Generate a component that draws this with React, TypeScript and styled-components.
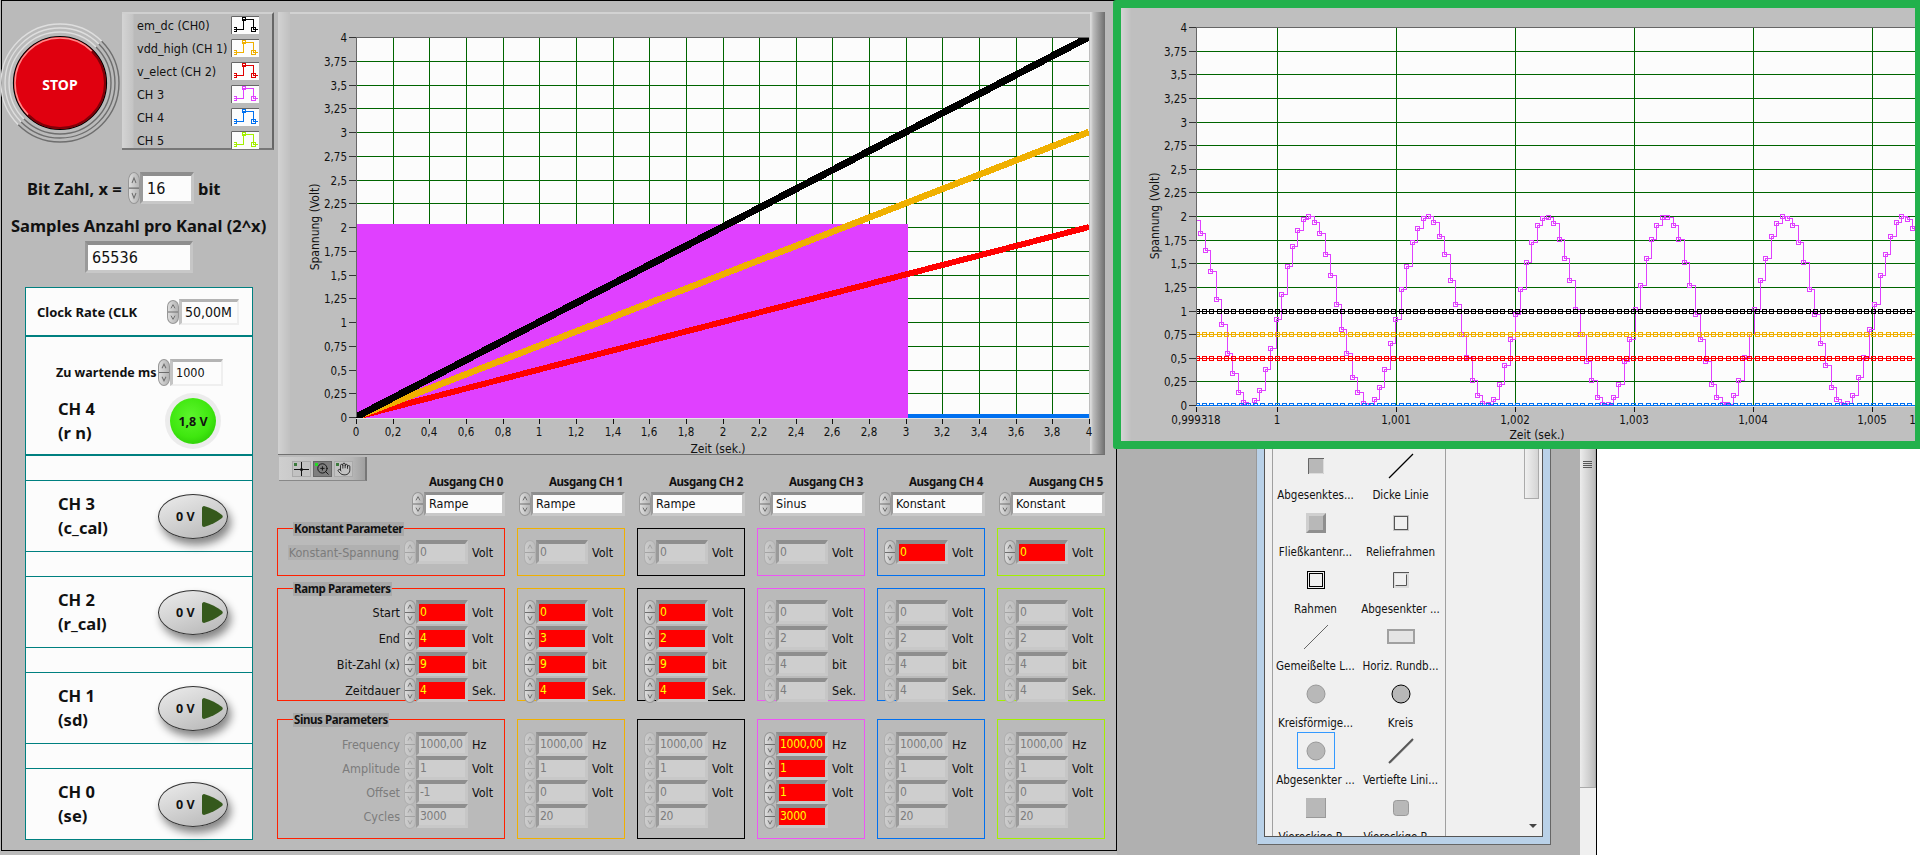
import React from 'react';
import styled, { createGlobalStyle } from 'styled-components';
import { Hand, ZoomIn } from 'lucide-react';

const FONT = '"DejaVu Sans Condensed", "Liberation Sans", sans-serif';
const BOLD_FONT = '"Noto Sans", "Liberation Sans", sans-serif';

const GlobalStyle = createGlobalStyle`
  html, body {
    margin: 0;
    padding: 0;
    background: #bababa;
    font-family: ${FONT};
    font-size: 12.5px;
    color: #111;
  }
`;

/* ---------- data ---------- */

interface IChannel {
  name: string;
  color: string;
  mode: string;
  konstantOn: boolean;
  rampOn: boolean;
  sinusOn: boolean;
  ramp: string[];
  sinus: string[];
}

const channels: IChannel[] = [
  { name: 'Ausgang CH 0', color: '#ff2000', mode: 'Rampe', konstantOn: false, rampOn: true, sinusOn: false, ramp: ['0', '4', '9', '4'], sinus: ['1000,00', '1', '-1', '3000'] },
  { name: 'Ausgang CH 1', color: '#f0b000', mode: 'Rampe', konstantOn: false, rampOn: true, sinusOn: false, ramp: ['0', '3', '9', '4'], sinus: ['1000,00', '1', '0', '20'] },
  { name: 'Ausgang CH 2', color: '#000000', mode: 'Rampe', konstantOn: false, rampOn: true, sinusOn: false, ramp: ['0', '2', '9', '4'], sinus: ['1000,00', '1', '0', '20'] },
  { name: 'Ausgang CH 3', color: '#ee55f5', mode: 'Sinus', konstantOn: false, rampOn: false, sinusOn: true, ramp: ['0', '2', '4', '4'], sinus: ['1000,00', '1', '1', '3000'] },
  { name: 'Ausgang CH 4', color: '#0070f0', mode: 'Konstant', konstantOn: true, rampOn: false, sinusOn: false, ramp: ['0', '2', '4', '4'], sinus: ['1000,00', '1', '0', '20'] },
  { name: 'Ausgang CH 5', color: '#a4f000', mode: 'Konstant', konstantOn: true, rampOn: false, sinusOn: false, ramp: ['0', '2', '4', '4'], sinus: ['1000,00', '1', '0', '20'] },
];

const legendItems = [
  { label: 'em_dc (CH0)', color: '#000000' },
  { label: 'vdd_high (CH 1)', color: '#f0b000' },
  { label: 'v_elect (CH 2)', color: '#e00000' },
  { label: 'CH 3', color: '#e040ff' },
  { label: 'CH 4', color: '#0070f0' },
  { label: 'CH 5', color: '#a4f000' },
];

const rampRows = [
  { label: 'Start', unit: 'Volt' },
  { label: 'End', unit: 'Volt' },
  { label: 'Bit-Zahl (x)', unit: 'bit' },
  { label: 'Zeitdauer', unit: 'Sek.' },
];

const sinusRows = [
  { label: 'Frequency', unit: 'Hz' },
  { label: 'Amplitude', unit: 'Volt' },
  { label: 'Offset', unit: 'Volt' },
  { label: 'Cycles', unit: '' },
];

const paletteItems = [
  { kind: 'sunkBox', label: 'Abgesenktes...' },
  { kind: 'thickLine', label: 'Dicke Linie' },
  { kind: 'flowBox', label: 'Fließkantenr...' },
  { kind: 'reliefFrame', label: 'Reliefrahmen' },
  { kind: 'doubleFrame', label: 'Rahmen' },
  { kind: 'sunkFrame', label: 'Abgesenkter ...' },
  { kind: 'thinLine', label: 'Gemeißelte L...' },
  { kind: 'roundBar', label: 'Horiz. Rundb...' },
  { kind: 'softCircle', label: 'Kreisförmige...' },
  { kind: 'circle', label: 'Kreis' },
  { kind: 'softCircle', label: 'Abgesenkter ...', selected: true },
  { kind: 'grooveLine', label: 'Vertiefte Lini...' },
  { kind: 'flatBox', label: 'Viereckige R...' },
  { kind: 'roundBox', label: 'Viereckige B...' },
];

const comma = (n: number) => String(n).replace('.', ',');
const yLabels = Array.from({ length: 17 }, (_, i) => comma(i * 0.25));

/* ---------- small controls ---------- */

const SpinnerBody = styled.div<{ $h: number; $off?: boolean }>`
  flex: none;
  position: relative;
  width: 12px;
  height: ${p => p.$h}px;
  box-sizing: border-box;
  border: 1px solid ${p => (p.$off ? '#b0b0b0' : '#979797')};
  border-radius: 50% / 28%;
  background: ${p =>
    p.$off
      ? 'linear-gradient(90deg, #cdcdcd, #bdbdbd)'
      : 'linear-gradient(90deg, #dddddd, #b4b4b4)'};
  svg {
    display: block;
    width: 10px;
    height: 100%;
  }
`;

const Spinner: React.FC<{ h?: number; off?: boolean }> = ({ h = 24, off }) => (
  <SpinnerBody $h={h} $off={off}>
    <svg viewBox="0 0 10 24" preserveAspectRatio="none">
      <path
        d="M0 12h10M3 8l2-4 2 4M3 16l2 4 2-4"
        fill="none"
        stroke={off ? '#a2a2a2' : '#6c6c6c'}
        strokeWidth="1"
      />
    </svg>
  </SpinnerBody>
);

const NumberBox = styled.div<{ $w: number; $h?: number; $big?: boolean; $tone?: 'red' | 'off' }>`
  flex: none;
  width: ${p => p.$w}px;
  height: ${p => p.$h ?? 24}px;
  box-sizing: border-box;
  border-style: solid;
  border-width: 4px 3px 3px 3px;
  border-color: #8e8e8e #c6c6c6 #c8c8c8 #9a9a9a;
  padding-left: ${p => (p.$big ? 4 : 1)}px;
  font-size: ${p => (p.$big ? 16 : 12)}px;
  letter-spacing: ${p => (p.$big ? 0 : -0.3)}px;
  line-height: ${p => (p.$h ?? 24) - 7}px;
  white-space: nowrap;
  overflow: hidden;
  background: ${p => (p.$tone === 'red' ? '#ff0000' : p.$tone === 'off' ? '#cecece' : '#fcfcfc')};
  color: ${p => (p.$tone === 'red' ? '#ffff00' : p.$tone === 'off' ? '#7c7c7c' : '#111')};
`;

const WhiteBox = styled.div<{ $w: number; $h: number; $big?: boolean }>`
  flex: none;
  width: ${p => p.$w}px;
  height: ${p => p.$h}px;
  box-sizing: border-box;
  border-style: solid;
  border-width: 3px 2px 2px 3px;
  border-color: #b4b4b4 #efefef #efefef #c4c4c4;
  padding-left: 3px;
  background: #fcfcfc;
  font-size: ${p => (p.$big ? 14 : 12.5)}px;
  line-height: ${p => p.$h - 5}px;
  color: #111;
`;

/* ---------- page ---------- */

const Page = styled.div`
  position: relative;
  display: flex;
  width: 1920px;
  height: 855px;
  overflow: hidden;
`;

const FrontPanel = styled.main`
  flex: none;
  display: flex;
  width: 1116px;
  height: 851px;
  margin-left: 1px;
  box-sizing: border-box;
  border: 1px solid #000;
  background: #bababa;
`;

const LeftColumn = styled.div`
  flex: none;
  width: 275px;
`;

const TopRow = styled.div`
  display: flex;
  margin-top: 11px;
`;

const StopSvg = styled.svg`
  flex: none;
  display: block;
  font-family: ${BOLD_FONT};
  overflow: visible;
`;

const Legend = styled.div`
  flex: none;
  display: flex;
  flex-direction: column;
  gap: 5px;
  width: 152px;
  height: 138px;
  box-sizing: border-box;
  padding: 2px 15px 0 15px;
  border-top: 2px solid #d0d0d0;
  border-right: 2px solid #666;
  border-bottom: 2px solid #777;
  background: linear-gradient(90deg, #d4d4d4, #c4c4c4 11px, #bababa 12px);
`;

const LegendRow = styled.div`
  display: flex;
  justify-content: space-between;
  align-items: center;
  height: 18px;
  white-space: nowrap;
`;

const LegendSwatch = styled.svg`
  flex: none;
  display: block;
  margin-right: -2px;
`;

const BitRow = styled.div`
  display: flex;
  align-items: center;
  height: 32px;
  margin: 22px 0 0 25px;
`;

const BoldLabel = styled.span`
  font-family: ${BOLD_FONT};
  font-weight: 700;
  font-size: 16.5px;
  white-space: nowrap;
`;

const BitText = styled(BoldLabel)`
  width: 101px;
`;

const BitUnit = styled(BoldLabel)`
  margin-left: 4px;
`;

const SamplesLabel = styled(BoldLabel)`
  display: block;
  margin: 12px 0 0 9px;
  line-height: 20px;
`;

const SamplesBox = styled(NumberBox)`
  margin: 5px 0 0 83px;
`;

const ChannelStack = styled.div`
  width: 228px;
  height: 553px;
  margin: 14px 0 0 23px;
  box-sizing: border-box;
  border: 1px solid #008080;
  background: #fcfcfc;
`;

const StackSection = styled.div<{ $h: number; $line?: number; $pad?: number }>`
  height: ${p => p.$h}px;
  box-sizing: border-box;
  padding-top: ${p => p.$pad ?? 0}px;
  border-bottom: ${p => p.$line ?? 1}px solid #008080;
`;

const ClockSection = styled(StackSection)`
  display: flex;
  align-items: center;
  padding-left: 11px;
`;

const ClockLabel = styled.span`
  width: 130px;
  font-family: ${BOLD_FONT};
  font-size: 13px;
  font-weight: 700;
  white-space: nowrap;
  overflow: hidden;
`;

const WaitRow = styled.div`
  display: flex;
  align-items: center;
  height: 28px;
  padding-left: 30px;
`;

const WaitLabel = styled.span`
  width: 102px;
  font-family: ${BOLD_FONT};
  font-size: 12.5px;
  font-weight: 700;
  white-space: nowrap;
`;

const ChannelRow = styled.div`
  display: grid;
  grid-template-columns: 1fr 76px;
  align-items: center;
  height: 70px;
  padding: 0 21px 0 32px;
`;

const ChannelName = styled.div`
  font-family: ${BOLD_FONT};
  font-size: 16.5px;
  font-weight: 700;
  line-height: 24px;
  white-space: nowrap;
`;

const Led = styled.div`
  justify-self: center;
  width: 46px;
  height: 46px;
  border-radius: 50%;
  display: flex;
  align-items: center;
  justify-content: center;
  font-family: ${BOLD_FONT};
  font-size: 12.5px;
  font-weight: 700;
  box-shadow: 0 0 0 5px #ececec;
  background: radial-gradient(circle at 45% 40%, #5cf52c 0%, #3fe70f 55%, #20b800 100%);
`;

const Toggle = styled.div`
  justify-self: center;
  display: flex;
  align-items: center;
  gap: 7px;
  width: 70px;
  height: 45px;
  box-sizing: border-box;
  padding-left: 17px;
  border: 1px solid #333;
  border-radius: 50%;
  font-family: ${BOLD_FONT};
  font-size: 12.5px;
  font-weight: 700;
  background: linear-gradient(160deg, #ececec, #cfcfcf 55%, #b5b5b5);
  box-shadow: 3px 6px 8px #858585;
  svg {
    flex: none;
    display: block;
  }
`;

const ToggleButton = () => (
  <Toggle>
    <span>0 V</span>
    <svg width="21" height="23" viewBox="0 0 21 23">
      <path d="M2 1c7 2 13 5 18 9 1 1 1 2 0 3-5 4-11 7-18 9-1 0-2-1-2-2V3c0-1 1-2 2-2z" fill="#35591c" />
    </svg>
  </Toggle>
);

const RightColumn = styled.div`
  flex: none;
  width: 839px;
`;

/* ---------- charts ---------- */

const ChartPanel = styled.section`
  width: 827px;
  height: 443px;
  margin: 11px 0 0 1px;
  box-sizing: border-box;
  border-bottom: 1px solid #707070;
  background:
    linear-gradient(90deg, #d2d2d2, #c0c0c0) left top / 12px 100% no-repeat,
    linear-gradient(90deg, #dadada 1px, #bdbdbd 3px, #6e6e6e) right top / 15px 100% no-repeat,
    linear-gradient(#d2d2d2, #d2d2d2) left top / 100% 2px no-repeat,
    #bebebe;
`;

const ChartSvg = styled.svg`
  display: block;
  font-family: ${FONT};
  font-size: 11.5px;
  fill: #111;
`;

interface IChartProps {
  width: number;
  height: number;
  px: number;
  py: number;
  pw: number;
  ph: number;
  grid: number[];
  xTicks: { x: number; label: string }[];
  titleX: number;
  titleY: number;
  sideX: number;
  children: React.ReactNode;
}

const Chart: React.FC<IChartProps> = ({ width, height, px, py, pw, ph, grid, xTicks, titleX, titleY, sideX, children }) => {
  const yAt = (i: number) => Math.round(ph - (i * ph) / 16) + 0.5;
  return (
    <ChartSvg width={width} height={height} viewBox={`0 0 ${width} ${height}`}>
      <text
        x={sideX}
        y={py + ph / 2}
        textAnchor="middle"
        dominantBaseline="central"
        fontSize="12"
        transform={`rotate(-90 ${sideX} ${py + ph / 2})`}
      >
        Spannung (Volt)
      </text>
      {yLabels.map((label, i) => (
        <g key={label}>
          <text x={px - 9} y={py + yAt(i)} textAnchor="end" dominantBaseline="central">
            {label}
          </text>
          <path d={`M${px - 7} ${py + yAt(i)}H${px}`} stroke="#333" shapeRendering="crispEdges" />
        </g>
      ))}
      {xTicks.map(t => (
        <g key={t.label}>
          <text x={px + t.x} y={py + ph + 15} textAnchor="middle" dominantBaseline="central">
            {t.label}
          </text>
          <path d={`M${px + t.x + 0.5} ${py + ph + 2}v5`} stroke="#111" shapeRendering="crispEdges" />
        </g>
      ))}
      <text x={titleX} y={titleY} textAnchor="middle" dominantBaseline="central" fontSize="12">
        Zeit (sek.)
      </text>
      <path d={`M${px} ${py + ph + 1}H${px + pw}`} stroke="#e4e4e4" strokeWidth="2" shapeRendering="crispEdges" />
      <svg x={px} y={py} width={pw} height={ph + 1} viewBox={`0 0 ${pw} ${ph + 1}`}>
        <rect width={pw} height={ph + 1} fill="#fcfcfc" />
        <g stroke="#006400" strokeWidth="1" shapeRendering="crispEdges" fill="none">
          {yLabels.map((label, i) => (
            <path key={label} d={`M0 ${yAt(i)}H${pw}`} />
          ))}
          {grid.map(x => (
            <path key={x} d={`M${x + 0.5} 0V${ph}`} />
          ))}
        </g>
        {children}
        <path d={`M0.5 0V${ph}M0 0.5H${pw}`} stroke="#666" fill="none" shapeRendering="crispEdges" />
      </svg>
    </ChartSvg>
  );
};

const rampGrid = Array.from({ length: 20 }, (_, i) => Math.round(((i + 1) * 733) / 20));
const rampTicks = Array.from({ length: 21 }, (_, i) => ({
  x: Math.round((i * 733) / 20),
  label: comma(Math.round(i * 20) / 100),
}));

const RampPlot = () => (
  <>
    <rect x="0" y="187" width="552" height="194" fill="#e040ff" />
    <rect x="552" y="377" width="181" height="4" fill="#0070f0" />
    <path d="M0 380L733 190" stroke="#ff0000" strokeWidth="6" shapeRendering="crispEdges" />
    <path d="M0 380L733 95" stroke="#f0b000" strokeWidth="6.5" shapeRendering="crispEdges" />
    <path d="M0 380L733 0" stroke="#000000" strokeWidth="7" shapeRendering="crispEdges" />
  </>
);

/* plot origin of the zoomed chart, in page pixels */
const Z_LEFT = 1196;
const Z_TOP = 27;
const zY = (v: number) => Math.round(378 - v * 94.5);

const zoomXs = (start: number, step: number) => {
  const out: number[] = [];
  for (let x = start; x < 1920; x += step) out.push(Math.round(x - Z_LEFT));
  return out;
};

const squares = (pts: [number, number][]) =>
  pts.map(([x, y]) => `M${x - 1.5} ${y - 1.5}h4v4h-4z`).join('');

const sinePts: [number, number][] = zoomXs(1308.3 - 21 * 5.44, 5.44).map(x => [
  x,
  zY(1 + Math.cos((2 * Math.PI * (x + Z_LEFT - 1307.5)) / 119)),
]);

const sineLine = sinePts
  .map(([x, y], i) => (i === 0 ? `M${x + 0.5} ${y + 0.5}` : `H${x + 0.5}V${y + 0.5}`))
  .join('');

const flatSeries = [
  { v: 0, color: '#0070f0' },
  { v: 0.5, color: '#ff0000' },
  { v: 0.75, color: '#f0b000' },
  { v: 1, color: '#000000' },
];

const flatXs = zoomXs(1306 - 15 * 7.27, 7.27);

const SinePlot = () => (
  <g fill="none" shapeRendering="crispEdges" strokeWidth="1">
    <path d={sineLine} stroke="#e040ff" />
    <path d={squares(sinePts)} stroke="#e040ff" />
    {flatSeries.map(s => {
      const y = zY(s.v);
      return (
        <g key={s.color} stroke={s.color}>
          <path d={`M0 ${y + 0.5}H719`} />
          <path d={squares(flatXs.map(x => [x, y] as [number, number]))} />
        </g>
      );
    })}
  </g>
);

const zoomGrid = [81, 200, 319, 438, 557, 676];
const zoomTicks = [
  { x: 0, label: '0,999318' },
  ...zoomGrid.map((x, i) => ({ x, label: i === 0 ? '1' : `1,00${i}` })),
  { x: 728, label: '1,006' },
];

const ZoomOverlay = styled.section`
  position: absolute;
  top: 0;
  left: 1113px;
  z-index: 10;
  width: 807px;
  height: 449px;
  box-sizing: border-box;
  border-style: solid;
  border-color: #22b14c;
  border-width: 8px 5px 8px 8px;
  border-radius: 3px 0 0 3px;
  overflow: hidden;
  background:
    linear-gradient(90deg, #d4d4d4, #c0c0c0) left top / 10px 100% no-repeat,
    #bfbfbf;
`;

/* ---------- graph toolbar ---------- */

const Toolbar = styled.div`
  flex: none;
  align-self: flex-start;
  display: flex;
  gap: 2px;
  width: 88px;
  height: 24px;
  margin-left: 2px;
  box-sizing: border-box;
  padding: 4px 0 0 13px;
  border-right: 2px solid #777;
  border-bottom: 1px solid #888;
  background: linear-gradient(90deg, #cfcfcf, #b6b6b6 85%, #a0a0a0);
`;

const ToolButton = styled.div<{ $pressed?: boolean }>`
  position: relative;
  display: flex;
  align-items: center;
  justify-content: center;
  width: 19px;
  height: 16px;
  box-sizing: border-box;
  border: 1px solid ${p => (p.$pressed ? '#666' : '#aaa')};
  color: #111;
  background: ${p => (p.$pressed ? '#7e7e7e' : '#c2c2c2')};
  &::before {
    content: '';
    position: absolute;
    left: 1px;
    top: 1px;
    width: 3px;
    height: 3px;
    background: ${p => (p.$pressed ? '#22dd22' : '#3c7a3c')};
  }
`;

/* ---------- output columns ---------- */

const OutputGrid = styled.div<{ $top: number; $h: number }>`
  display: grid;
  grid-template-columns: 228px repeat(5, 108px);
  column-gap: 12px;
  grid-auto-rows: ${p => p.$h}px;
  margin-top: ${p => p.$top}px;
`;

const OutputCell = styled.div`
  display: flex;
  flex-direction: column;
  justify-content: flex-end;
  align-items: flex-end;
`;

const FirstCell = styled.div`
  display: flex;
  justify-content: space-between;
`;

const OutputTitle = styled.div`
  font-family: ${BOLD_FONT};
  font-size: 11.5px;
  letter-spacing: -0.4px;
  font-weight: 700;
  line-height: 17px;
  margin-bottom: 2px;
  padding-right: 2px;
  white-space: nowrap;
`;

const ModeSelect = styled.div`
  display: flex;
`;

const ModeBox = styled.div<{ $w: number }>`
  width: ${p => p.$w}px;
  height: 24px;
  box-sizing: border-box;
  border-style: solid;
  border-width: 3px 3px 3px 2px;
  border-color: #8e8e8e #c6c6c6 #c8c8c8 #9a9a9a;
  padding-left: 3px;
  background: #fcfcfc;
  line-height: 18px;
`;

const Group = styled.div<{ $color: string; $pad: number }>`
  position: relative;
  box-sizing: border-box;
  border: 1px solid ${p => p.$color};
  padding-top: ${p => p.$pad}px;
`;

const GroupTitle = styled.span`
  position: absolute;
  top: -7px;
  left: 15px;
  padding: 0 1px;
  font-family: ${BOLD_FONT};
  font-size: 11.5px;
  letter-spacing: -0.4px;
  font-weight: 700;
  line-height: 14px;
  background: #a9a9a9;
  white-space: nowrap;
`;

const ParamRow = styled.div<{ $h: number; $first: boolean }>`
  display: flex;
  align-items: center;
  height: ${p => p.$h}px;
  padding-left: ${p => (p.$first ? 0 : 6)}px;
`;

const ParamLabel = styled.span<{ $off?: boolean }>`
  flex: none;
  width: 122px;
  margin-right: 4px;
  text-align: right;
  white-space: nowrap;
  color: ${p => (p.$off ? '#7c7c7c' : '#111')};
`;

const KonstantLabel = styled.span`
  padding: 0 1px;
  background: #b0b0b0;
`;

const Unit = styled.span`
  margin-left: 4px;
  white-space: nowrap;
`;

interface IParamProps {
  label?: React.ReactNode;
  labelOff?: boolean;
  value: string;
  on: boolean;
  unit: string;
  h: number;
  first: boolean;
}

const Param: React.FC<IParamProps> = ({ label, labelOff, value, on, unit, h, first }) => (
  <ParamRow $h={h} $first={first}>
    {first && <ParamLabel $off={labelOff}>{label}</ParamLabel>}
    <Spinner off={!on} h={25} />
    <NumberBox $w={52} $tone={on ? 'red' : 'off'}>
      {value}
    </NumberBox>
    {unit && <Unit>{unit}</Unit>}
  </ParamRow>
);

/* ---------- palette window ---------- */

const Desktop = styled.div`
  flex: none;
  display: flex;
  align-items: flex-end;
  width: 463px;
  height: 855px;
  box-sizing: border-box;
  padding: 0 30px 11px 140px;
  background: #b0b0b0;
`;

const PaletteWindow = styled.aside`
  display: flex;
  width: 293px;
  height: 404px;
  box-sizing: border-box;
  border: 7px solid #b9d1e8;
  border-top: none;
  box-shadow: 1px 1px 0 #666, -1px 0 0 #999;
`;

const PaletteInner = styled.div`
  flex: 1;
  display: flex;
  height: 100%;
  box-sizing: border-box;
  border: 1px solid #555;
  border-top: none;
  background: #f0f0f0;
  padding-left: 7px;
  overflow: hidden;
`;

const PaletteList = styled.div`
  flex: none;
  display: grid;
  grid-template-columns: 85px 85px;
  grid-auto-rows: 57px;
  align-content: start;
  width: 174px;
  box-sizing: border-box;
  padding-top: 7px;
  border-left: 1px solid #a0a0a0;
  border-right: 1px solid #a0a0a0;
`;

const PaletteItem = styled.div`
  display: flex;
  flex-direction: column;
  align-items: center;
`;

const PaletteIconCell = styled.div<{ $selected?: boolean }>`
  flex: none;
  display: flex;
  align-items: center;
  justify-content: center;
  width: 38px;
  height: 37px;
  box-sizing: border-box;
  border: 1px solid ${p => (p.$selected ? '#3399ff' : 'transparent')};
`;

const PaletteLabel = styled.span`
  flex: none;
  font-size: 11.5px;
  line-height: 23px;
  white-space: nowrap;
`;

const PaletteGap = styled.div`
  flex: 1;
`;

const PaletteScroll = styled.div`
  flex: none;
  position: relative;
  width: 19px;
  background: #f0f0f0;
`;

const PaletteThumb = styled.div`
  width: 15px;
  height: 59px;
  margin-left: 1px;
  box-sizing: border-box;
  border: 1px solid #aaa;
  border-top: none;
  background: linear-gradient(90deg, #f0f0f0, #d4d4d4);
`;

const PaletteArrow = styled.div`
  position: absolute;
  left: 6px;
  bottom: 8px;
  border-style: solid;
  border-width: 4px 4px 0 4px;
  border-color: #444 transparent transparent transparent;
`;

const PaletteIcon: React.FC<{ kind: string }> = ({ kind }) => {
  switch (kind) {
    case 'sunkBox':
      return (
        <svg width="18" height="18">
          <rect x="1" y="1" width="16" height="16" fill="#b8b8b8" />
          <path d="M1.5 17V1.5H17" stroke="#666" fill="none" />
          <path d="M2 16.5H16.5V2" stroke="#dcdcdc" fill="none" />
        </svg>
      );
    case 'thickLine':
      return (
        <svg width="26" height="26">
          <path d="M1 25L25 1" stroke="#000" strokeWidth="1.2" />
        </svg>
      );
    case 'flowBox':
      return (
        <svg width="20" height="20">
          <rect width="20" height="20" fill="#8f8f8f" />
          <path d="M0 0H20L17 3H3V17L0 20z" fill="#cfcfcf" />
          <rect x="3" y="3" width="14" height="14" fill="#b8b8b8" />
        </svg>
      );
    case 'reliefFrame':
      return (
        <svg width="16" height="16">
          <rect width="16" height="16" fill="#c8c8c8" />
          <rect x="1.5" y="1.5" width="13" height="13" fill="#f0f0f0" stroke="#555" />
        </svg>
      );
    case 'doubleFrame':
      return (
        <svg width="18" height="18">
          <rect x="0.5" y="0.5" width="17" height="17" fill="none" stroke="#000" />
          <rect x="2.5" y="2.5" width="13" height="13" fill="#f0f0f0" stroke="#000" />
        </svg>
      );
    case 'sunkFrame':
      return (
        <svg width="16" height="16">
          <rect width="16" height="16" fill="#dcdcdc" />
          <rect x="2" y="2" width="12" height="12" fill="#f0f0f0" />
          <path d="M0.5 16V0.5H16M2.5 13.5H13.5V2.5" stroke="#555" fill="none" />
        </svg>
      );
    case 'thinLine':
      return (
        <svg width="26" height="26">
          <path d="M1 25L25 1" stroke="#666" strokeWidth="1" />
        </svg>
      );
    case 'roundBar':
      return (
        <svg width="28" height="15">
          <rect width="28" height="15" fill="#a0a0a0" />
          <rect x="2" y="2" width="24" height="11" fill="#e4e4e4" />
        </svg>
      );
    case 'softCircle':
      return (
        <svg width="20" height="20">
          <circle cx="10" cy="10" r="9" fill="#b8b8b8" stroke="#999" />
        </svg>
      );
    case 'circle':
      return (
        <svg width="20" height="20">
          <circle cx="10" cy="10" r="9" fill="#b8b8b8" stroke="#000" />
        </svg>
      );
    case 'grooveLine':
      return (
        <svg width="26" height="26">
          <path d="M1 25L25 1" stroke="#555" strokeWidth="2" />
          <path d="M3 25L25 3" stroke="#c8c8c8" strokeWidth="1" />
        </svg>
      );
    case 'flatBox':
      return (
        <svg width="20" height="20">
          <rect width="20" height="20" fill="#b8b8b8" />
          <path d="M0 19.5H20M19.5 0V20" stroke="#999" />
        </svg>
      );
    default:
      return (
        <svg width="16" height="16">
          <rect x="0.5" y="0.5" width="15" height="15" rx="3" fill="#b8b8b8" stroke="#999" />
        </svg>
      );
  }
};

const PageScroll = styled.div`
  flex: none;
  display: flex;
  flex-direction: column;
  width: 17px;
  height: 855px;
  box-sizing: border-box;
  border-right: 1px solid #000;
  background: #f0f0f0;
`;

const PageThumb = styled.div`
  height: 788px;
  box-sizing: border-box;
  padding: 461px 3px 0;
  border-right: 1px solid #aaa;
  border-bottom: 1px solid #aaa;
  background: linear-gradient(90deg, #ececec, #d0d0d0 60%, #bcbcbc);
`;

const Gripper = styled.div`
  height: 7px;
  background: repeating-linear-gradient(#555 0 1px, transparent 1px 2px);
`;

const WhiteArea = styled.div`
  flex: 1;
  background: #ffffff;
`;

/* ---------- stop button ---------- */

const ringArc = (r: number, from: number, to: number) => {
  const a = (from * Math.PI) / 180;
  const b = (to * Math.PI) / 180;
  return `M${58 + r * Math.cos(a)} ${71 + r * Math.sin(a)}A${r} ${r} 0 0 1 ${58 + r * Math.cos(b)} ${71 + r * Math.sin(b)}`;
};

const StopButton = () => (
  <StopSvg width="120" height="138" viewBox="0 0 120 138">
    {[59, 55, 51].map(r => (
      <g key={r} fill="none" strokeWidth="1.4">
        <path d={ringArc(r, 135, 315)} stroke="#dedede" />
        <path d={ringArc(r, -45, 135)} stroke="#6e6e6e" />
      </g>
    ))}
    <circle cx="58" cy="71" r="46.5" fill="#e0000f" stroke="#000" strokeWidth="1.2" />
    <path d={ringArc(45, 135, 315)} stroke="#ff8a8a" strokeWidth="1.5" fill="none" />
    <path d={ringArc(45, -45, 135)} stroke="#800008" strokeWidth="2" fill="none" />
    <text x="58" y="72" textAnchor="middle" dominantBaseline="central" fill="#fff" fontSize="14" fontWeight="700">
      STOP
    </text>
  </StopSvg>
);

const LegendIcon: React.FC<{ color: string }> = ({ color }) => (
  <LegendSwatch width="28" height="18" viewBox="0 0 28 18">
    <rect width="28" height="18" fill="#fcfcfc" />
    <path d="M0.5 18V0.5H28" stroke="#666" fill="none" />
    <g stroke={color} fill="none" shapeRendering="crispEdges">
      <path d="M3 13.5H12.5V3.5H22.5V13.5H27" />
      <path d="M2.5 11.5H5.5V15.5H2.5M11.5 1.5H14.5V4.5H11.5z" />
      <path d="M20.5 11.5H24.5V15.5H20.5z" />
    </g>
  </LegendSwatch>
);

const CrossIcon = () => (
  <svg width="15" height="14" viewBox="0 0 15 14">
    <path d="M7.5 0V14M0 7.5H15" stroke="#111" fill="none" />
    <circle cx="7.5" cy="7.5" r="1.5" fill="#111" />
  </svg>
);

const App: React.FC = () => (
  <Page>
    <GlobalStyle />
    <FrontPanel>
      <LeftColumn>
        <TopRow>
          <StopButton />
          <Legend>
            {legendItems.map(item => (
              <LegendRow key={item.label}>
                {item.label}
                <LegendIcon color={item.color} />
              </LegendRow>
            ))}
          </Legend>
        </TopRow>
        <BitRow>
          <BitText>Bit Zahl, x =</BitText>
          <Spinner h={32} />
          <NumberBox $w={54} $h={32} $big>
            16
          </NumberBox>
          <BitUnit>bit</BitUnit>
        </BitRow>
        <SamplesLabel>Samples Anzahl pro Kanal (2^x)</SamplesLabel>
        <SamplesBox $w={108} $h={32} $big>
          65536
        </SamplesBox>
        <ChannelStack>
          <ClockSection $h={49} $line={2}>
            <ClockLabel>Clock Rate (CLK</ClockLabel>
            <Spinner h={24} />
            <WhiteBox $w={60} $h={26} $big>
              50,00M
            </WhiteBox>
          </ClockSection>
          <StackSection $h={119} $line={2} $pad={21}>
            <WaitRow>
              <WaitLabel>Zu wartende ms</WaitLabel>
              <Spinner h={27} />
              <WhiteBox $w={53} $h={27}>
                1000
              </WhiteBox>
            </WaitRow>
            <ChannelRow>
              <div>
                <ChannelName>CH 4</ChannelName>
                <ChannelName>(r n)</ChannelName>
              </div>
              <Led>1,8 V</Led>
            </ChannelRow>
          </StackSection>
          {[
            ['CH 3', '(c_cal)'],
            ['CH 2', '(r_cal)'],
            ['CH 1', '(sd)'],
            ['CH 0', '(se)'],
          ].map(([name, pin], i) => (
            <React.Fragment key={name}>
              <StackSection $h={25} />
              <StackSection $h={i === 3 ? 70 : 71} $line={i === 3 ? 0 : 1}>
                <ChannelRow>
                  <div>
                    <ChannelName>{name}</ChannelName>
                    <ChannelName>{pin}</ChannelName>
                  </div>
                  <ToggleButton />
                </ChannelRow>
              </StackSection>
            </React.Fragment>
          ))}
        </ChannelStack>
      </LeftColumn>

      <RightColumn>
        <ChartPanel>
          <Chart
            width={827}
            height={442}
            px={78}
            py={25}
            pw={733}
            ph={380}
            grid={rampGrid}
            xTicks={rampTicks}
            titleX={440}
            titleY={437}
            sideX={37}
          >
            <RampPlot />
          </Chart>
        </ChartPanel>

        <OutputGrid $top={2} $h={59}>
          {channels.map((ch, i) => {
            const head = (
              <OutputCell key={ch.name}>
                <OutputTitle>{ch.name}</OutputTitle>
                <ModeSelect>
                  <Spinner h={24} />
                  <ModeBox $w={i === 0 ? 81 : 94}>{ch.mode}</ModeBox>
                </ModeSelect>
              </OutputCell>
            );
            return i === 0 ? (
              <FirstCell key={ch.name}>
                <Toolbar>
                  <ToolButton>
                    <CrossIcon />
                  </ToolButton>
                  <ToolButton $pressed>
                    <ZoomIn size={14} strokeWidth={1.6} />
                  </ToolButton>
                  <ToolButton>
                    <Hand size={14} strokeWidth={1.4} />
                  </ToolButton>
                </Toolbar>
                {head}
              </FirstCell>
            ) : (
              head
            );
          })}
        </OutputGrid>

        <OutputGrid $top={12} $h={48}>
          {channels.map((ch, i) => (
            <Group key={ch.name} $color={ch.color} $pad={11}>
              {i === 0 && <GroupTitle>Konstant Parameter</GroupTitle>}
              <Param
                label={<KonstantLabel>Konstant-Spannung</KonstantLabel>}
                labelOff
                value="0"
                on={ch.konstantOn}
                unit="Volt"
                h={24}
                first={i === 0}
              />
            </Group>
          ))}
        </OutputGrid>

        <OutputGrid $top={12} $h={113}>
          {channels.map((ch, i) => (
            <Group key={ch.name} $color={ch.color} $pad={10}>
              {i === 0 && <GroupTitle>Ramp Parameters</GroupTitle>}
              {rampRows.map((row, r) => (
                <Param
                  key={row.label}
                  label={row.label}
                  value={ch.ramp[r]}
                  on={ch.rampOn}
                  unit={row.unit}
                  h={26}
                  first={i === 0}
                />
              ))}
            </Group>
          ))}
        </OutputGrid>

        <OutputGrid $top={18} $h={120}>
          {channels.map((ch, i) => (
            <Group key={ch.name} $color={ch.color} $pad={12}>
              {i === 0 && <GroupTitle>Sinus Parameters</GroupTitle>}
              {sinusRows.map((row, r) => (
                <Param
                  key={row.label}
                  label={row.label}
                  labelOff
                  value={ch.sinus[r]}
                  on={ch.sinusOn}
                  unit={row.unit}
                  h={24}
                  first={i === 0}
                />
              ))}
            </Group>
          ))}
        </OutputGrid>
      </RightColumn>
    </FrontPanel>

    <Desktop>
      <PaletteWindow>
        <PaletteInner>
          <PaletteList>
            {paletteItems.map((item, i) => (
              <PaletteItem key={i}>
                <PaletteIconCell $selected={item.selected}>
                  <PaletteIcon kind={item.kind} />
                </PaletteIconCell>
                <PaletteLabel>{item.label}</PaletteLabel>
              </PaletteItem>
            ))}
          </PaletteList>
          <PaletteGap />
          <PaletteScroll>
            <PaletteThumb />
            <PaletteArrow />
          </PaletteScroll>
        </PaletteInner>
      </PaletteWindow>
    </Desktop>
    <PageScroll>
      <PageThumb>
        <Gripper />
      </PageThumb>
    </PageScroll>
    <WhiteArea />

    <ZoomOverlay>
      <Chart
        width={794}
        height={433}
        px={Z_LEFT - 1121}
        py={Z_TOP - 8}
        pw={719}
        ph={378}
        grid={zoomGrid}
        xTicks={zoomTicks}
        titleX={416}
        titleY={427}
        sideX={34}
      >
        <SinePlot />
      </Chart>
    </ZoomOverlay>
  </Page>
);

export default App;
